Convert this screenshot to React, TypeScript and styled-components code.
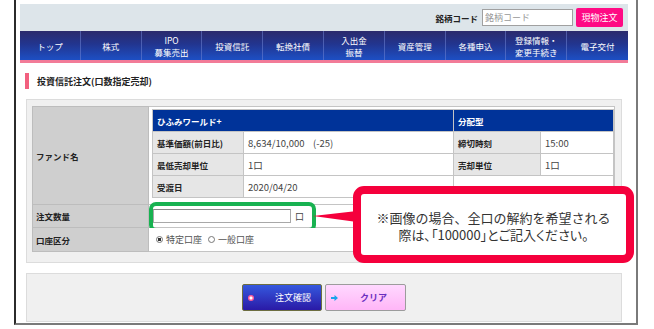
import React from 'react';
import styled, { createGlobalStyle } from 'styled-components';

const Global = createGlobalStyle`
  html, body { margin: 0; padding: 0; background: #fff; }
  body { font-family: "Noto Sans CJK JP", "Noto Sans", sans-serif; color: #222; }
  * { box-sizing: border-box; }
`;

const Frame = styled.div`
  position: relative;
  margin-left: 14px;
  width: 624px;
  height: 325px;
  border-left: 2px solid #2b2b2b;
  border-right: 2px solid #7a7a7a;
  border-bottom: 2px solid #7a7a7a;
  padding: 4px 8px 0 4px;
`;

const TopBar = styled.div`
  height: 27px;
  background: #dde5ea;
  display: flex;
  align-items: center;
  justify-content: flex-end;
  padding-right: 5px;
`;

const CodeLabel = styled.span`
  font-size: 8.5px;
  font-weight: bold;
  color: #222;
  margin-right: 4px;
`;

const CodeInput = styled.input`
  width: 91px;
  height: 17px;
  border: 1px solid #a0a0a0;
  background: #fff;
  font-family: inherit;
  font-size: 9px;
  padding: 0 2px;
  outline: none;
  &::placeholder { color: #999; }
`;

const SpotButton = styled.button`
  margin-left: 3px;
  width: 47px;
  height: 19px;
  border: none;
  border-radius: 2px;
  background: #ff0a84;
  color: #fff;
  font-family: inherit;
  font-size: 9px;
  padding: 0;
`;

const Nav = styled.nav`
  height: 29px;
  display: grid;
  grid-template-columns: repeat(10, 1fr);
  background: linear-gradient(#2b2a6c 0%, #22358f 45%, #1d4fc4 100%);
`;

const NavItem = styled.div<{ $last?: boolean }>`
  display: flex;
  align-items: center;
  justify-content: center;
  text-align: center;
  color: #fff;
  font-size: 8.5px;
  line-height: 12px;
  border-right: ${p => (p.$last ? 'none' : '1px solid rgba(110,130,210,0.55)')};
`;

const NavLine = styled.span`
  display: block;
`;

const PinkLine = styled.div`
  height: 3px;
  background: #f27b98;
`;

const TitleRow = styled.div`
  display: flex;
  align-items: center;
  height: 16px;
  margin: 10px 0 10px 5px;
`;

const TitleBar = styled.div`
  width: 4px;
  height: 16px;
  background: #f2607f;
`;

const TitleText = styled.h1`
  margin: 0 0 0 8px;
  font-size: 9px;
  font-weight: bold;
  color: #222;
`;

const Panel = styled.div`
  margin: 0 6px;
  height: 164px;
  background: #f0f0f0;
  border: 1px solid #dcdcdc;
  padding: 6px 6px 0 5px;
`;

const OuterTable = styled.table`
  width: 583px;
  border-collapse: collapse;
  table-layout: fixed;
`;

const LabelCell = styled.td<{ $h: number }>`
  width: 116px;
  height: ${p => p.$h}px;
  background: #cfcfcf;
  border: 1px solid #bdbdbd;
  font-size: 8.5px;
  font-weight: bold;
  padding: 0 0 0 3px;
  color: #222;
`;

const ValueCell = styled.td`
  position: relative;
  background: #fff;
  border: 1px solid #c4c4c4;
  padding: 0 0 0 4px;
  font-size: 9px;
  color: #444;
`;

const FundCell = styled.td`
  background: #fff;
  border: 1px solid #c4c4c4;
  padding: 2px 1px 6px 3px;
  vertical-align: top;
`;

const InnerTable = styled.table`
  width: 461px;
  border-collapse: collapse;
  table-layout: fixed;
`;

const HeadCell = styled.td`
  height: 22px;
  background: #003399;
  color: #fff;
  font-size: 8.5px;
  font-weight: bold;
  padding: 0 0 0 4px;
  border: 1px solid #c4c4c4;
`;

const ItemLabel = styled.td`
  height: 22px;
  background: #e6e6e6;
  font-size: 8.5px;
  font-weight: bold;
  padding: 0 0 0 4px;
  border: 1px solid #c4c4c4;
  color: #222;
`;

const ItemValue = styled.td`
  height: 22px;
  background: #fff;
  font-size: 9.5px;
  padding: 0 0 0 4px;
  border: 1px solid #c4c4c4;
  color: #444;
  white-space: pre;
`;

const QtyInput = styled.input`
  width: 138px;
  height: 14px;
  border: 1px solid #a8a8a8;
  border-top-color: #888;
  background: #fff;
  vertical-align: middle;
  outline: none;
`;

const Unit = styled.span`
  margin-left: 4px;
  font-size: 9px;
  vertical-align: middle;
`;

const Highlight = styled.div`
  position: absolute;
  left: 0;
  top: -3px;
  width: 167px;
  height: 30px;
  border: 4px solid #18b251;
  border-radius: 7px;
  pointer-events: none;
`;

const RadioGroup = styled.div`
  display: flex;
  align-items: center;
  gap: 3px;
  font-size: 9px;
  color: #555;
  padding-left: 3px;
`;

const Radio = styled.span<{ $on?: boolean }>`
  width: 7px;
  height: 7px;
  border-radius: 50%;
  border: 1px solid #777;
  background: ${p => (p.$on ? 'radial-gradient(circle, #333 0 1.6px, #fff 2px)' : '#fff')};
  margin-left: ${p => (p.$on ? '0' : '3px')};
`;

const ButtonPanel = styled.div`
  margin: 10px 6px 0;
  height: 49px;
  background: #f0f0f0;
  border: 1px solid #dcdcdc;
  display: flex;
  align-items: center;
  justify-content: center;
  gap: 3px;
`;

const OrderButton = styled.button`
  position: relative;
  width: 80px;
  height: 27px;
  border: 1px solid #6d6d40;
  border-radius: 2px;
  background: linear-gradient(#3558de, #2a1aa6);
  color: #fff;
  font-family: inherit;
  font-size: 9px;
  text-align: left;
  padding: 0 0 0 32px;
`;

const Dot = styled.span`
  position: absolute;
  left: 5px;
  top: 10px;
  width: 6px;
  height: 6px;
  border-radius: 50%;
  background: radial-gradient(circle, #fff 0 1px, #ff5c9c 2px);
`;

const ClearButton = styled.button`
  position: relative;
  width: 81px;
  height: 27px;
  border: 1px solid #9c9c9c;
  border-radius: 2px;
  background: linear-gradient(#ffd8ff, #ffb6f7);
  color: #6b2fc0;
  font-family: inherit;
  font-size: 9px;
  font-weight: bold;
  text-align: left;
  padding: 0 0 0 34px;
`;

const Arrow = styled.svg`
  position: absolute;
  left: 5px;
  top: 10px;
`;

const Pointer = styled.svg`
  position: absolute;
  left: 297px;
  top: 210px;
  z-index: 2;
`;

const Callout = styled.div`
  position: absolute;
  left: 337px;
  top: 186px;
  width: 281px;
  height: 77px;
  border: 8px solid #f5003c;
  border-radius: 11px;
  background: #fff;
  z-index: 3;
  display: flex;
  flex-direction: column;
  align-items: center;
  justify-content: center;
  font-size: 13px;
  line-height: 17px;
  color: #333;
  padding-top: 2px;
`;

const CalloutLine = styled.div<{ $tight?: boolean }>`
  font-feature-settings: ${p => (p.$tight ? '"palt"' : 'normal')};
`;

const navItems: string[][] = [
  ['トップ'],
  ['株式'],
  ['IPO', '募集売出'],
  ['投資信託'],
  ['転換社債'],
  ['入出金', '振替'],
  ['資産管理'],
  ['各種申込'],
  ['登録情報・', '変更手続き'],
  ['電子交付'],
];

export default function App() {
  return (
    <>
      <Global />
      <Frame>
        <TopBar>
          <CodeLabel>銘柄コード</CodeLabel>
          <CodeInput placeholder="銘柄コード" />
          <SpotButton>現物注文</SpotButton>
        </TopBar>
        <Nav>
          {navItems.map((lines, i) => (
            <NavItem key={i} $last={i === navItems.length - 1}>
              <div>
                {lines.map((l, j) => (
                  <NavLine key={j}>{l}</NavLine>
                ))}
              </div>
            </NavItem>
          ))}
        </Nav>
        <PinkLine />
        <TitleRow>
          <TitleBar />
          <TitleText>投資信託注文(口数指定売却)</TitleText>
        </TitleRow>
        <Panel>
          <OuterTable>
            <tbody>
              <tr>
                <LabelCell $h={98}>ファンド名</LabelCell>
                <FundCell>
                  <InnerTable>
                    <colgroup>
                      <col style={{ width: 91 }} />
                      <col style={{ width: 210 }} />
                      <col style={{ width: 87 }} />
                      <col style={{ width: 73 }} />
                    </colgroup>
                    <tbody>
                      <tr>
                        <HeadCell colSpan={2}>ひふみワールド+</HeadCell>
                        <HeadCell colSpan={2}>分配型</HeadCell>
                      </tr>
                      <tr>
                        <ItemLabel>基準価額(前日比)</ItemLabel>
                        <ItemValue>{'8,634/10,000    (-25)'}</ItemValue>
                        <ItemLabel>締切時刻</ItemLabel>
                        <ItemValue>15:00</ItemValue>
                      </tr>
                      <tr>
                        <ItemLabel>最低売却単位</ItemLabel>
                        <ItemValue>1口</ItemValue>
                        <ItemLabel>売却単位</ItemLabel>
                        <ItemValue>1口</ItemValue>
                      </tr>
                      <tr>
                        <ItemLabel>受渡日</ItemLabel>
                        <ItemValue>2020/04/20</ItemValue>
                        <ItemValue colSpan={2} />
                      </tr>
                    </tbody>
                  </InnerTable>
                </FundCell>
              </tr>
              <tr>
                <LabelCell $h={23}>注文数量</LabelCell>
                <ValueCell>
                  <QtyInput />
                  <Unit>口</Unit>
                  <Highlight />
                </ValueCell>
              </tr>
              <tr>
                <LabelCell $h={24}>口座区分</LabelCell>
                <ValueCell>
                  <RadioGroup>
                    <Radio $on />
                    <span>特定口座</span>
                    <Radio />
                    <span>一般口座</span>
                  </RadioGroup>
                </ValueCell>
              </tr>
            </tbody>
          </OuterTable>
        </Panel>
        <ButtonPanel>
          <OrderButton>
            <Dot />
            注文確認
          </OrderButton>
          <ClearButton>
            <Arrow width="7" height="6" viewBox="0 0 7 6">
              <path d="M0 2h3.5V0L7 3 3.5 6V4H0z" fill="#1aa3ea" />
            </Arrow>
            クリア
          </ClearButton>
        </ButtonPanel>
        <Pointer width="44" height="14" viewBox="0 0 44 14">
          <polygon points="0,6 44,1 44,12" fill="#f5003c" />
        </Pointer>
        <Callout>
          <CalloutLine>※画像の場合、全口の解約を希望される</CalloutLine>
          <CalloutLine $tight>際は､「100000」とご記入ください。</CalloutLine>
        </Callout>
      </Frame>
    </>
  );
}
